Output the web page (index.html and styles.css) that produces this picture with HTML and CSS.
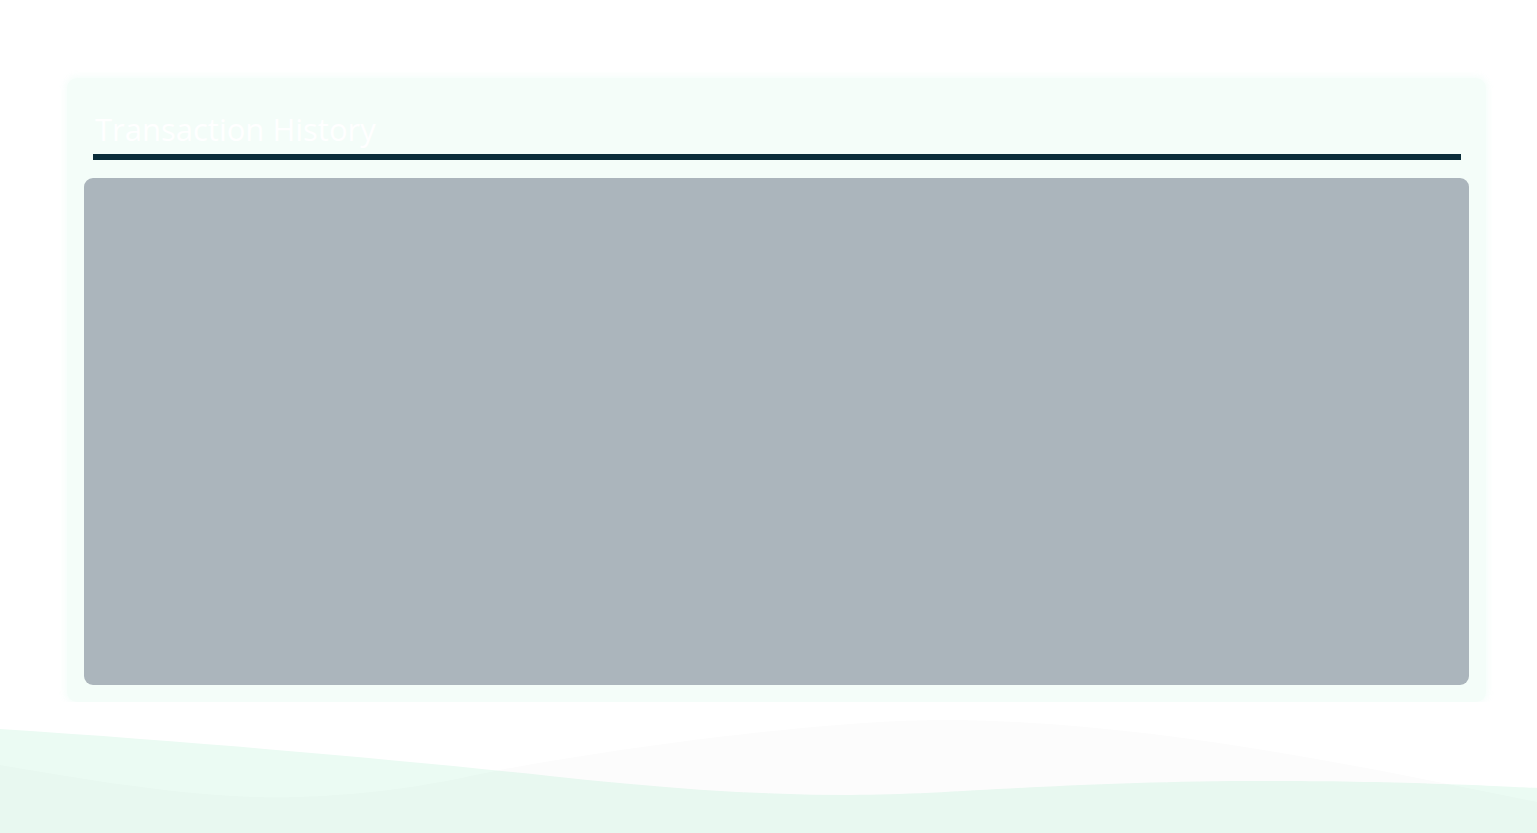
FILE: index.html
```html
<!DOCTYPE html>
<html lang="en">
<head>
<meta charset="utf-8">
<title>Transaction History</title>
<link rel="stylesheet" href="styles.css">
</head>
<body>
<svg class="waves" viewBox="0 720 1537 113" preserveAspectRatio="none" aria-hidden="true">
  <path class="wave-a" d="M0 729 C200 742 400 760 550 776 C650 787 750 795 850 795 C950 795 1050 782 1250 781 C1400 780 1537 788 1537 788 L1537 833 L0 833 Z"/>
  <path class="wave-b" d="M0 765 C120 786 220 800 300 797 C400 793 450 780 500 770 C650 742 850 719 950 720 C1150 722 1350 764 1537 802 L1537 833 L0 833 Z"/>
</svg>
<main class="page">
  <section class="card">
    <header class="card-header">
      <h1 class="card-title">Transaction History</h1>
      <div class="card-rule"></div>
    </header>
    <div class="panel"></div>
  </section>
</main>
</body>
</html>
```
FILE: styles.css
```css
html, body {
  margin: 0;
  padding: 0;
  background: #ffffff;
  font-family: "Open Sans", "Noto Sans", sans-serif;
}

.waves {
  position: fixed;
  left: 0;
  bottom: 0;
  width: 100%;
  height: 113px;
  display: block;
  z-index: 0;
}

.wave-a { fill: #ebfbf3; }
.wave-b { fill: rgba(40, 50, 45, 0.016); }

.page {
  position: relative;
  z-index: 1;
  padding: 78px 51px 0 67px;
}

.card {
  width: 1419px;
  box-sizing: border-box;
  padding: 17px;
  background: #f4fdf9;
  border-radius: 10px;
  box-shadow: 0 0 6px 2px rgba(244, 253, 249, 0.9);
}

.card-header {
  padding: 16px 8px 0 9px;
}

.card-title {
  margin: 0;
  font-size: 31px;
  line-height: 36px;
  font-weight: 400;
  color: #ffffff;
  padding-left: 2px;
}

.card-rule {
  margin-top: 7px;
  height: 6px;
  background: #0a2d3a;
}

.panel {
  margin-top: 18px;
  height: 507px;
  background: #abb5bc;
  border-radius: 9px;
}
```
